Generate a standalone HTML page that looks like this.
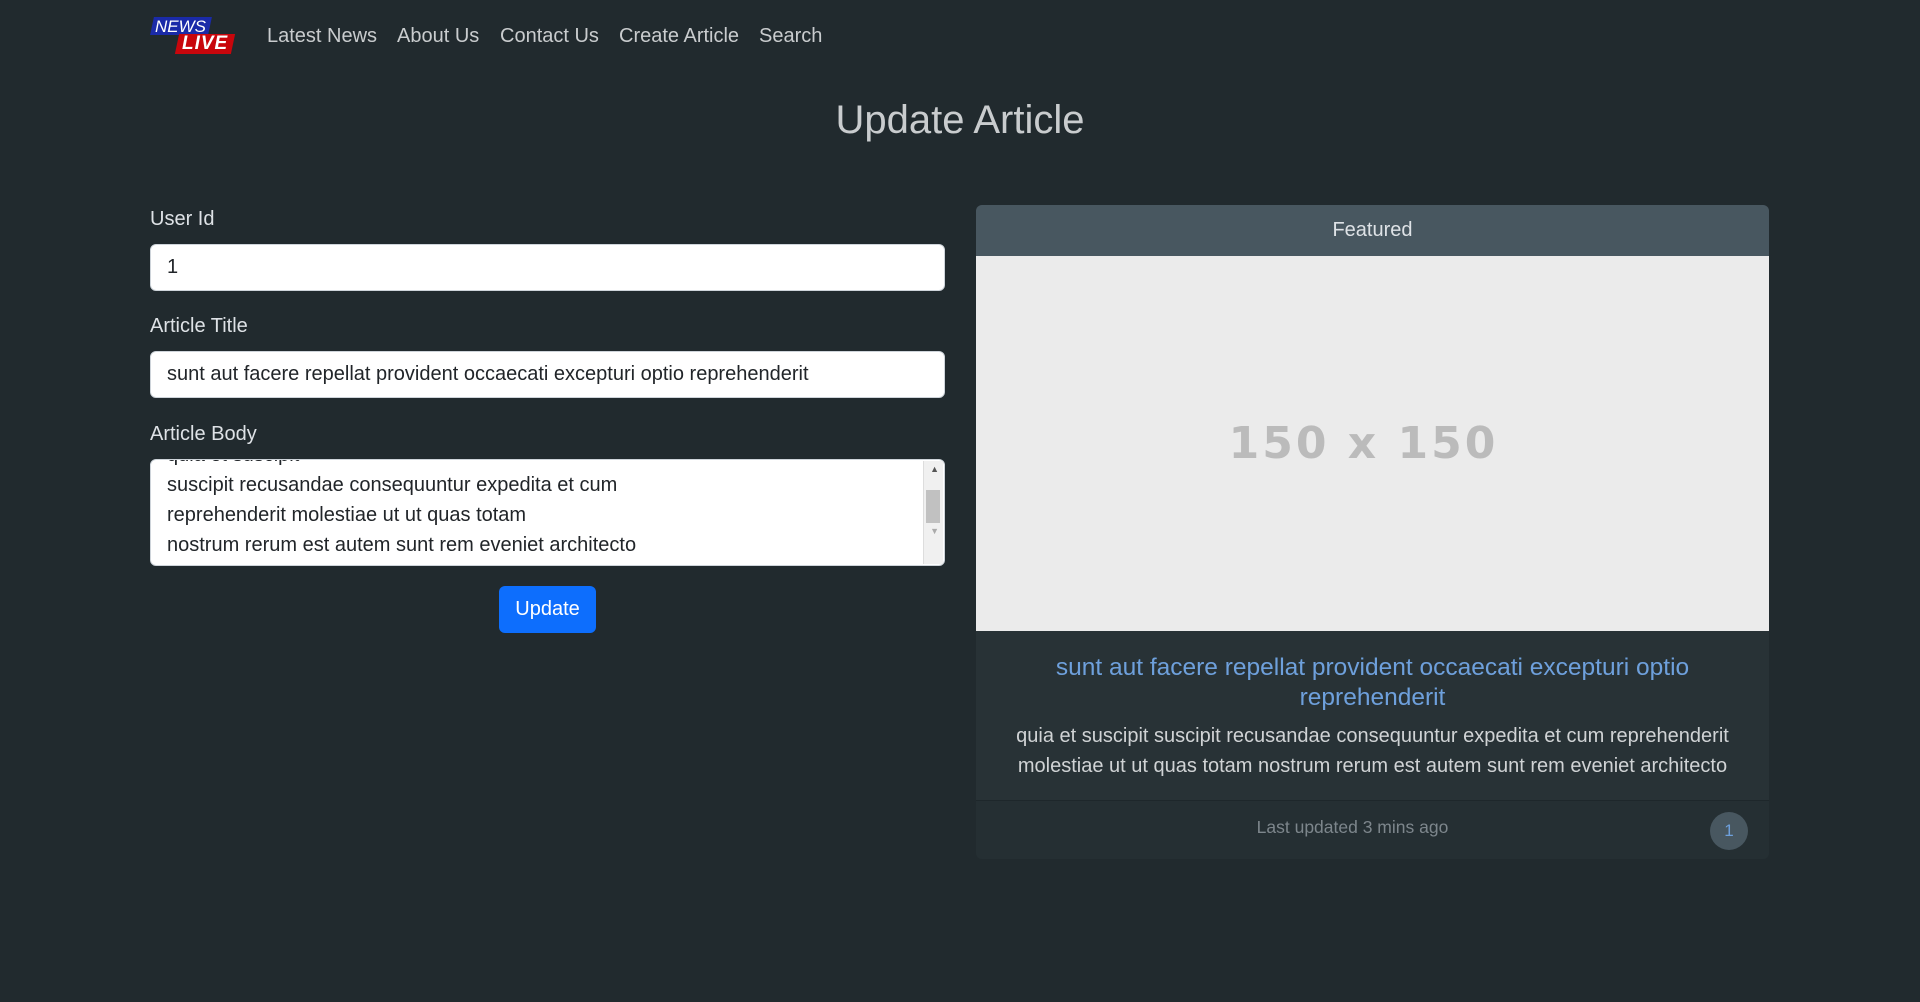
<!DOCTYPE html>
<html><head><meta charset="utf-8"><style>
*{box-sizing:border-box;margin:0;padding:0}
body{width:1920px;height:1002px;background:#212a2e;font-family:"Liberation Sans",sans-serif;color:#dee2e6;overflow:hidden;position:relative}
.abs{position:absolute}
.nav a{position:absolute;top:25px;font-size:20px;color:#c9ccce;text-decoration:none}
label{position:absolute;left:150px;font-size:20px;color:#dee2e6}
.inp{position:absolute;left:150px;width:795px;height:47px;background:#fff;border:1px solid #ced4da;border-radius:6px;font-size:20px;color:#212529;padding:11px 16px}
</style></head><body>
<div class="abs" style="left:152px;top:17px;width:58px;height:18px;background:#1a2aa8;transform:skewX(-12deg)"></div>
<div class="abs" style="left:155px;top:17px;font:italic 17px 'Liberation Sans',sans-serif;color:#fff">NEWS</div>
<div class="abs" style="left:177px;top:34px;width:56px;height:20px;background:#c8060c;transform:skewX(-12deg)"></div>
<div class="abs" style="left:182px;top:33px;font:italic bold 19px 'Liberation Sans',sans-serif;color:#fff;letter-spacing:1px">LIVE</div>
<div class="nav">
<a style="left:267px">Latest News</a><a style="left:397px">About Us</a><a style="left:500px">Contact Us</a><a style="left:619px">Create Article</a><a style="left:759px">Search</a>
</div>
<div class="abs" style="left:0;width:1920px;top:98px;text-align:center;font-size:40px;color:#c9ccce">Update Article</div>
<label style="top:208px">User Id</label>
<div class="inp" style="top:244px">1</div>
<label style="top:315px">Article Title</label>
<div class="inp" style="top:351px">sunt aut facere repellat provident occaecati excepturi optio reprehenderit</div>
<label style="top:423px">Article Body</label>
<div class="inp" style="top:459px;height:107px;padding:8px 16px;line-height:30px;overflow:hidden">
<div style="margin-top:-28px">quia et suscipit</div>
<div>suscipit recusandae consequuntur expedita et cum</div>
<div>reprehenderit molestiae ut ut quas totam</div>
<div>nostrum rerum est autem sunt rem eveniet architecto</div>
<div class="abs" style="right:1px;top:1px;width:20px;height:103px;background:#f0f0f0;border-left:1px solid #ddd"></div>
<div class="abs" style="right:4px;top:30px;width:14px;height:33px;background:#c1c1c1"></div>
<div class="abs" style="right:5px;top:4px;font-size:9px;color:#555;line-height:10px">▲</div>
<div class="abs" style="right:5px;top:66px;font-size:9px;color:#aaa;line-height:10px">▼</div>
</div>
<div class="abs" style="left:499px;top:586px;width:97px;height:47px;background:#0d6efd;border-radius:6px;color:#fff;font-size:20px;text-align:center;line-height:47px">Update</div>
<div class="abs" style="left:976px;top:205px;width:793px;height:654px;background:#283236;border-radius:6px;overflow:hidden">
<div style="height:51px;background:#485760;text-align:center;line-height:51px;font-size:20px;color:#dee2e6">Featured</div>
<div style="height:375px;background:#ebebeb;text-align:center;font:bold 44px 'DejaVu Sans',sans-serif;line-height:375px;color:#bbb;letter-spacing:3px;text-indent:-18px">150 x 150</div>
<div style="text-align:center;padding:22px 30px 0;font-size:24.5px;line-height:30px;color:#6ea0dc">sunt aut facere repellat provident occaecati excepturi optio reprehenderit</div>
<div style="text-align:center;padding:8px 20px 0;font-size:20px;line-height:30px;color:#d0d3d5">quia et suscipit suscipit recusandae consequuntur expedita et cum reprehenderit molestiae ut ut quas totam nostrum rerum est autem sunt rem eveniet architecto</div>
<div class="abs" style="left:0;top:595px;width:793px;height:59px;background:#252f33;border-top:1px solid #1e272b">
<div style="text-align:center;font-size:17.5px;color:#7d868c;line-height:52px;padding-right:40px">Last updated 3 mins ago</div>
<div class="abs" style="left:734px;top:11px;width:38px;height:38px;border-radius:50%;background:#485760;color:#6ea0dc;text-align:center;line-height:38px;font-size:17px">1</div>
</div>
</div>
</body></html>
